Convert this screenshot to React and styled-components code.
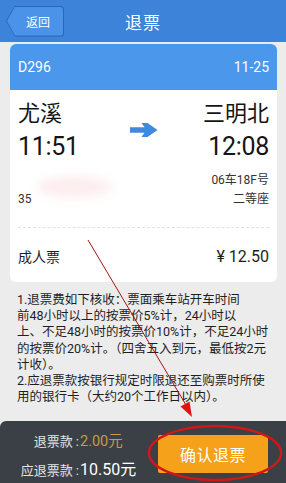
import React from 'react';
import styled, { createGlobalStyle } from 'styled-components';

const GlobalStyle = createGlobalStyle`
  html, body {
    margin: 0;
    padding: 0;
    background: #ececec;
  }
  body {
    font-family: Roboto, "Noto Sans CJK SC", sans-serif;
  }
`;

const Page = styled.div`
  position: relative;
  width: 286px;
  height: 483px;
  display: flex;
  flex-direction: column;
  overflow: hidden;
  background: #ececec;
`;

const Header = styled.div`
  height: 42px;
  display: grid;
  grid-template-columns: 1fr auto 1fr;
  align-items: center;
  padding: 0 6px;
  background: #3d83d9;
  border-bottom: 1px solid #e6eef8;
`;

const BackButton = styled.button`
  position: relative;
  justify-self: start;
  width: 58px;
  height: 31px;
  border: none;
  padding: 0 0 0 6px;
  background: #2c66b5;
  border-radius: 0 4px 4px 0;
  clip-path: polygon(9px 0, 100% 0, 100% 100%, 9px 100%, 0 50%);
  color: #fff;
  font-family: inherit;
  font-size: 12px;
  cursor: pointer;

  &::before {
    content: '';
    position: absolute;
    inset: 1px;
    background: #4a93e9;
    border-radius: 0 3px 3px 0;
    clip-path: polygon(8px 0, 100% 0, 100% 100%, 8px 100%, 0 50%);
  }

  span {
    position: relative;
  }
`;

const Title = styled.div`
  color: #fff;
  font-size: 17px;
  letter-spacing: 1px;
`;

const Content = styled.div`
  padding: 1px 9px 0 10px;
`;

const Card = styled.div`
  background: #fff;
  border-radius: 6px;
`;

const CardHeader = styled.div`
  height: 46px;
  display: flex;
  justify-content: space-between;
  align-items: center;
  padding: 0 8px;
  background: #4a97ec;
  border-radius: 6px 6px 0 0;
  color: #fff;
  font-size: 14px;
`;

const CardBody = styled.div`
  position: relative;
  padding: 12px 8px 20px;
`;

const Route = styled.div`
  display: grid;
  grid-template-columns: 1fr auto 1fr;
  align-items: center;
`;

const Stop = styled.div`
  display: flex;
  flex-direction: column;
  align-items: ${(p) => (p.$right ? 'flex-end' : 'flex-start')};
  color: #151515;
`;

const Station = styled.div`
  font-size: 22px;
  line-height: 24px;
`;

const Time = styled.div`
  margin-top: 7px;
  font-size: 25px;
  line-height: 28px;
  letter-spacing: -0.3px;
`;

const ArrowIcon = styled.svg`
  margin-top: -4px;
  display: block;
`;

const InfoRow = styled.div`
  display: flex;
  justify-content: ${(p) => (p.$right ? 'flex-end' : 'space-between')};
  margin-top: ${(p) => p.$gap}px;
  font-size: 12px;
  line-height: 16px;
  color: #333;
`;

const Smudge = styled.span`
  position: absolute;
  left: 26px;
  top: 86px;
  width: 76px;
  height: 22px;
  border-radius: 50%;
  background: #fdeef0;
  filter: blur(5px);
`;

const Divider = styled.div`
  position: relative;
  margin: 0 8px;
  border-top: 1px dashed #e2e2e2;

  &::before,
  &::after {
    content: '';
    position: absolute;
    top: -10px;
    width: 19px;
    height: 19px;
    border-radius: 50%;
    background: #ececec;
  }
  &::before {
    left: -27px;
  }
  &::after {
    right: -27px;
  }
`;

const Fare = styled.div`
  display: flex;
  justify-content: space-between;
  align-items: center;
  padding: 19px 8px 15px;
  line-height: 20px;
  color: #1e1e1e;
`;

const FareType = styled.span`
  font-size: 14px;
`;

const FarePrice = styled.span`
  font-size: 16px;
`;

const Notes = styled.div`
  margin-top: 10px;
  padding: 0 7px;
  font-size: 12.5px;
  line-height: 16.2px;
  color: #1e1e1e;
  white-space: nowrap;
`;

const BottomBar = styled.div`
  margin-top: auto;
  height: 62px;
  display: flex;
  align-items: center;
  justify-content: space-between;
  padding: 4px 18px 0 18px;
  box-sizing: border-box;
  background: #3a4045;
  border-radius: 6px 0 0 0;
`;

const Amounts = styled.div`
  display: grid;
  grid-template-columns: 62px auto;
  row-gap: 6px;
  align-items: baseline;
`;

const AmountLabel = styled.span`
  justify-self: end;
  font-size: 13px;
  color: #e4e4e4;
  padding-right: 1px;
`;

const AmountValue = styled.span`
  font-size: ${(p) => (p.$big ? 16 : 14.5)}px;
  color: ${(p) => (p.$gold ? '#c99a4e' : '#fff')};
`;

const ConfirmButton = styled.button`
  width: 110px;
  height: 38px;
  border: none;
  border-radius: 2px;
  background: #f5a11a;
  color: #fff;
  font-family: inherit;
  font-size: 16px;
  letter-spacing: 0.5px;
  cursor: pointer;
`;

const Annotation = styled.svg`
  position: absolute;
  left: 0;
  top: 0;
  pointer-events: none;
`;

function App() {
  return (
    <>
      <GlobalStyle />
      <Page>
        <Header>
          <BackButton>
            <span>返回</span>
          </BackButton>
          <Title>退票</Title>
          <span />
        </Header>

        <Content>
          <Card>
            <CardHeader>
              <span>D296</span>
              <span>11-25</span>
            </CardHeader>
            <CardBody>
              <Smudge />
              <Route>
                <Stop>
                  <Station>尤溪</Station>
                  <Time>11:51</Time>
                </Stop>
                <ArrowIcon width="28" height="14" viewBox="0 0 28 14">
                  <path d="M0 4.3H14.5L11.5 0H17.5L27.5 7L17.5 14H11.5L14.5 9.7H0Z" fill="#3f88e0" />
                </ArrowIcon>
                <Stop $right>
                  <Station>三明北</Station>
                  <Time>12:08</Time>
                </Stop>
              </Route>
              <InfoRow $right $gap={11}>
                <span>06车18F号</span>
              </InfoRow>
              <InfoRow $gap={3}>
                <span>35</span>
                <span>二等座</span>
              </InfoRow>
            </CardBody>
            <Divider />
            <Fare>
              <FareType>成人票</FareType>
              <FarePrice>¥ 12.50</FarePrice>
            </Fare>
          </Card>

          <Notes>
            1.退票费如下核收：票面乘车站开车时间<br />
            前48小时以上的按票价5%计，24小时以<br />
            上、不足48小时的按票价10%计，不足24小时<br />
            的按票价20%计。（四舍五入到元，最低按2元<br />
            计收）。<br />
            2.应退票款按银行规定时限退还至购票时所使<br />
            用的银行卡（大约20个工作日以内）。
          </Notes>
        </Content>

        <BottomBar>
          <Amounts>
            <AmountLabel>退票款 :</AmountLabel>
            <AmountValue $gold>2.00元</AmountValue>
            <AmountLabel>应退票款 :</AmountLabel>
            <AmountValue $big>10.50元</AmountValue>
          </Amounts>
          <ConfirmButton>确认退票</ConfirmButton>
        </BottomBar>

        <Annotation width="286" height="483" viewBox="0 0 286 483">
          <line x1="88" y1="240" x2="186" y2="405" stroke="#a31515" strokeWidth="1" />
          <polygon points="192,417 180.5,406.5 189.5,401.5" fill="#e01212" />
          <ellipse cx="215" cy="453" rx="66" ry="27" fill="none" stroke="#d01818" strokeWidth="2.5" />
        </Annotation>
      </Page>
    </>
  );
}

export default App;
